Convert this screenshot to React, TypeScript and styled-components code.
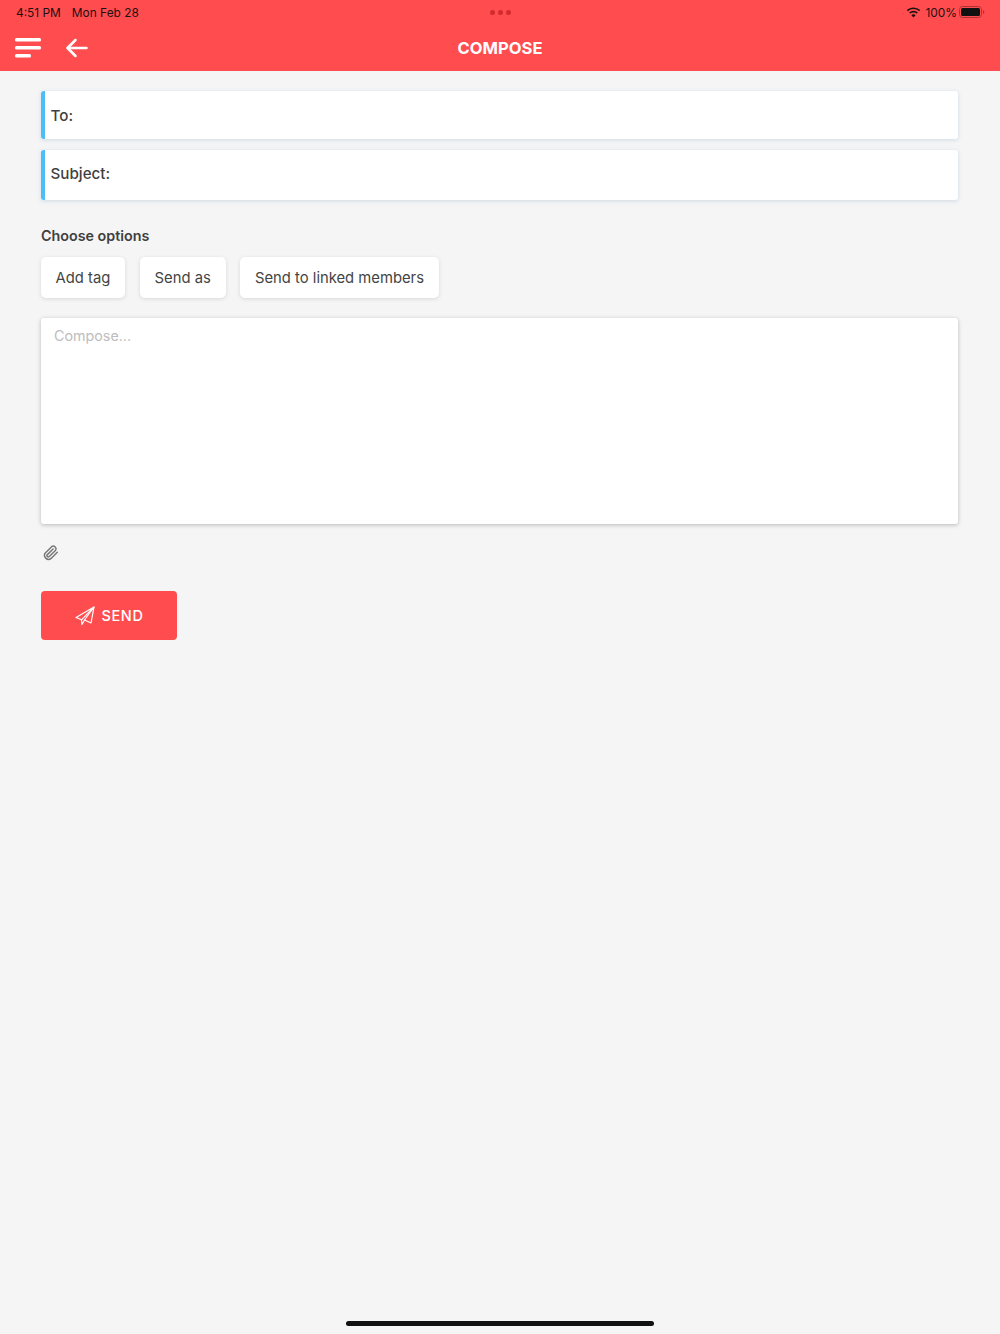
import React from 'react';
import styled, { createGlobalStyle } from 'styled-components';

const GlobalStyle = createGlobalStyle`
  html, body {
    margin: 0;
    padding: 0;
    background-color: #f5f5f5;
  }
  * {
    box-sizing: border-box;
  }
`;

const Page = styled.div`
  width: 1000px;
  height: 1334px;
  display: flex;
  flex-direction: column;
  background-color: #f5f5f5;
  font-family: Inter, "Liberation Sans", sans-serif;
  color: #3f3f3f;
  overflow: hidden;
`;

const Header = styled.header`
  height: 71px;
  background-color: #ff4d4f;
  display: flex;
  flex-direction: column;
  flex-shrink: 0;
`;

const StatusBar = styled.div`
  height: 24px;
  padding: 0 15px 0 16px;
  display: grid;
  grid-template-columns: 1fr auto 1fr;
  align-items: center;
  font-size: 11.9px;
  color: #1c1111;
`;

const StatusLeft = styled.div`
  display: flex;
  gap: 11px;
`;

const StatusRight = styled.div`
  display: flex;
  justify-content: flex-end;
  align-items: center;
  gap: 2px;
`;

const WifiGlyph = styled.svg`
  margin-right: 2px;
`;

const Dots = styled.div`
  display: flex;
  gap: 3px;
`;

const Dot = styled.span`
  width: 5px;
  height: 5px;
  border-radius: 50%;
  background-color: #d42a2e;
`;

const NavBar = styled.div`
  flex: 1;
  position: relative;
  display: flex;
  align-items: center;
  justify-content: center;
`;

const NavIcons = styled.div`
  position: absolute;
  left: 15px;
  top: 0;
  bottom: 0;
  display: flex;
  align-items: center;
  gap: 24px;
`;

const IconButton = styled.button`
  padding: 0;
  border: none;
  background: transparent;
  display: flex;
  cursor: pointer;
`;

const Title = styled.h1`
  margin: 0;
  font-size: 16.6px;
  font-weight: 700;
  color: #fff;
`;

const Content = styled.main`
  padding: 20px 42px 0 41px;
  display: flex;
  flex-direction: column;
`;

const Field = styled.div<{ $height: number; $gap: number; $lift: number }>`
  height: ${(p) => p.$height}px;
  margin-bottom: ${(p) => p.$gap}px;
  display: flex;
  align-items: center;
  padding-left: 5.5px;
  padding-bottom: ${(p) => p.$lift}px;
  background-color: #fff;
  border-left: 4px solid #4fbdf5;
  border-radius: 3px;
  box-shadow: 0 1px 4px rgba(120, 160, 190, 0.3);
  font-size: 15.2px;
  font-weight: 500;
`;

const SectionLabel = styled.div`
  margin-bottom: 11px;
  font-size: 14.3px;
  font-weight: 600;
  line-height: 20px;
`;

const OptionRow = styled.div`
  display: flex;
  gap: 14.6px;
  margin-bottom: 20px;
`;

const OptionButton = styled.button`
  height: 41px;
  padding: 0 15px 0 14.6px;
  border: none;
  border-radius: 5px;
  background-color: #fff;
  box-shadow: 0 1px 4px rgba(0, 0, 0, 0.12);
  color: #444;
  font-family: inherit;
  font-size: 14.8px;
  cursor: pointer;
`;

const ComposeArea = styled.textarea`
  display: block;
  width: 100%;
  height: 206px;
  padding: 8px 13px;
  border: none;
  border-radius: 3px;
  outline: none;
  resize: none;
  background-color: #fff;
  box-shadow: 0 1px 4px rgba(0, 0, 0, 0.25);
  font-family: inherit;
  font-size: 14.3px;
  line-height: 20px;

  &::placeholder {
    color: #bdbdbd;
    opacity: 1;
  }
`;

const AttachButton = styled(IconButton)`
  margin: 21px 0 30px 2px;
  width: fit-content;
`;

const SendButton = styled.button`
  width: 136px;
  height: 49px;
  display: flex;
  align-items: center;
  justify-content: center;
  gap: 7px;
  padding: 0;
  border: none;
  border-radius: 4px;
  background-color: #ff4d4f;
  color: #fff;
  font-family: inherit;
  font-size: 14.5px;
  font-weight: 500;
  letter-spacing: 0.6px;
  cursor: pointer;
`;

const HomeBar = styled.div`
  width: 308px;
  height: 5px;
  margin: auto auto 8px;
  border-radius: 3px;
  background-color: #111;
`;

function WifiIcon() {
  return (
    <WifiGlyph width="15" height="11" viewBox="0 0 15 11" fill="#1c1111">
      <path d="M7.5 2.1c2.2 0 4.1.8 5.6 2.2l1.1-1.2A9.7 9.7 0 0 0 7.5.5C5 .5 2.6 1.5.8 3.1l1.1 1.2A8.1 8.1 0 0 1 7.5 2.1z" />
      <path d="M7.5 5.4c1.3 0 2.4.5 3.3 1.2l1.1-1.2a6.5 6.5 0 0 0-8.8 0l1.1 1.2c.9-.8 2-1.2 3.3-1.2z" />
      <path d="M7.5 10.5l2.1-2.3a3.1 3.1 0 0 0-4.2 0z" />
    </WifiGlyph>
  );
}

function BatteryIcon() {
  return (
    <svg width="26" height="12" viewBox="0 0 26 12">
      <rect x="0.5" y="0.5" width="22" height="11" rx="3" fill="none" stroke="#a8343a" />
      <rect x="2" y="2" width="19" height="8" rx="1.5" fill="#111" />
      <path d="M24 4v4c.7-.2 1.3-1 1.3-2s-.6-1.8-1.3-2z" fill="#a8343a" />
    </svg>
  );
}

function MenuIcon() {
  return (
    <svg width="26" height="20" viewBox="0 0 26 20" fill="#fff">
      <rect x="0" y="0" width="26" height="3.5" rx="1.5" />
      <rect x="0" y="8" width="26" height="3.5" rx="1.5" />
      <rect x="0" y="16" width="16" height="3.5" rx="1.5" />
    </svg>
  );
}

function BackIcon() {
  return (
    <svg width="24" height="20" viewBox="0 0 24 20" fill="none" stroke="#fff" strokeWidth="2.5" strokeLinecap="round" strokeLinejoin="round">
      <path d="M21.5 10H3" />
      <path d="M10.5 2L2.5 10l8 8" />
    </svg>
  );
}

function ClipIcon() {
  return (
    <svg width="16" height="16" viewBox="0 0 24 24" fill="none" stroke="#777" strokeWidth="2.2" strokeLinecap="round" strokeLinejoin="round">
      <path d="m21.4 11-9.2 9.1a6 6 0 0 1-8.4-8.5l9.2-9.1a4 4 0 0 1 5.6 5.6l-9.2 9.2a2 2 0 0 1-2.8-2.9l8.5-8.4" />
    </svg>
  );
}

function PlaneIcon() {
  return (
    <svg width="20" height="20" viewBox="0 0 20 20" fill="none" stroke="#fff" strokeWidth="1.2" strokeLinejoin="round">
      <path d="M19 1L1 11.5l5.5 2.3L19 1z" />
      <path d="M19 1l-3 16-6.5-3-2.5 4.5-.5-4.7" />
      <path d="M9.5 14L19 1" />
    </svg>
  );
}

export default function App() {
  return (
    <Page>
      <GlobalStyle />
      <Header>
        <StatusBar>
          <StatusLeft>
            <span>4:51 PM</span>
            <span>Mon Feb 28</span>
          </StatusLeft>
          <Dots>
            <Dot />
            <Dot />
            <Dot />
          </Dots>
          <StatusRight>
            <WifiIcon />
            <span>100%</span>
            <BatteryIcon />
          </StatusRight>
        </StatusBar>
        <NavBar>
          <NavIcons>
            <IconButton aria-label="Menu">
              <MenuIcon />
            </IconButton>
            <IconButton aria-label="Back">
              <BackIcon />
            </IconButton>
          </NavIcons>
          <Title>COMPOSE</Title>
        </NavBar>
      </Header>
      <Content>
        <Field $height={48} $gap={11} $lift={0}>To:</Field>
        <Field $height={50} $gap={26} $lift={3}>Subject:</Field>
        <SectionLabel>Choose options</SectionLabel>
        <OptionRow>
          <OptionButton>Add tag</OptionButton>
          <OptionButton>Send as</OptionButton>
          <OptionButton>Send to linked members</OptionButton>
        </OptionRow>
        <ComposeArea placeholder="Compose..." />
        <AttachButton aria-label="Attach">
          <ClipIcon />
        </AttachButton>
        <SendButton>
          <PlaneIcon />
          SEND
        </SendButton>
      </Content>
      <HomeBar />
    </Page>
  );
}
